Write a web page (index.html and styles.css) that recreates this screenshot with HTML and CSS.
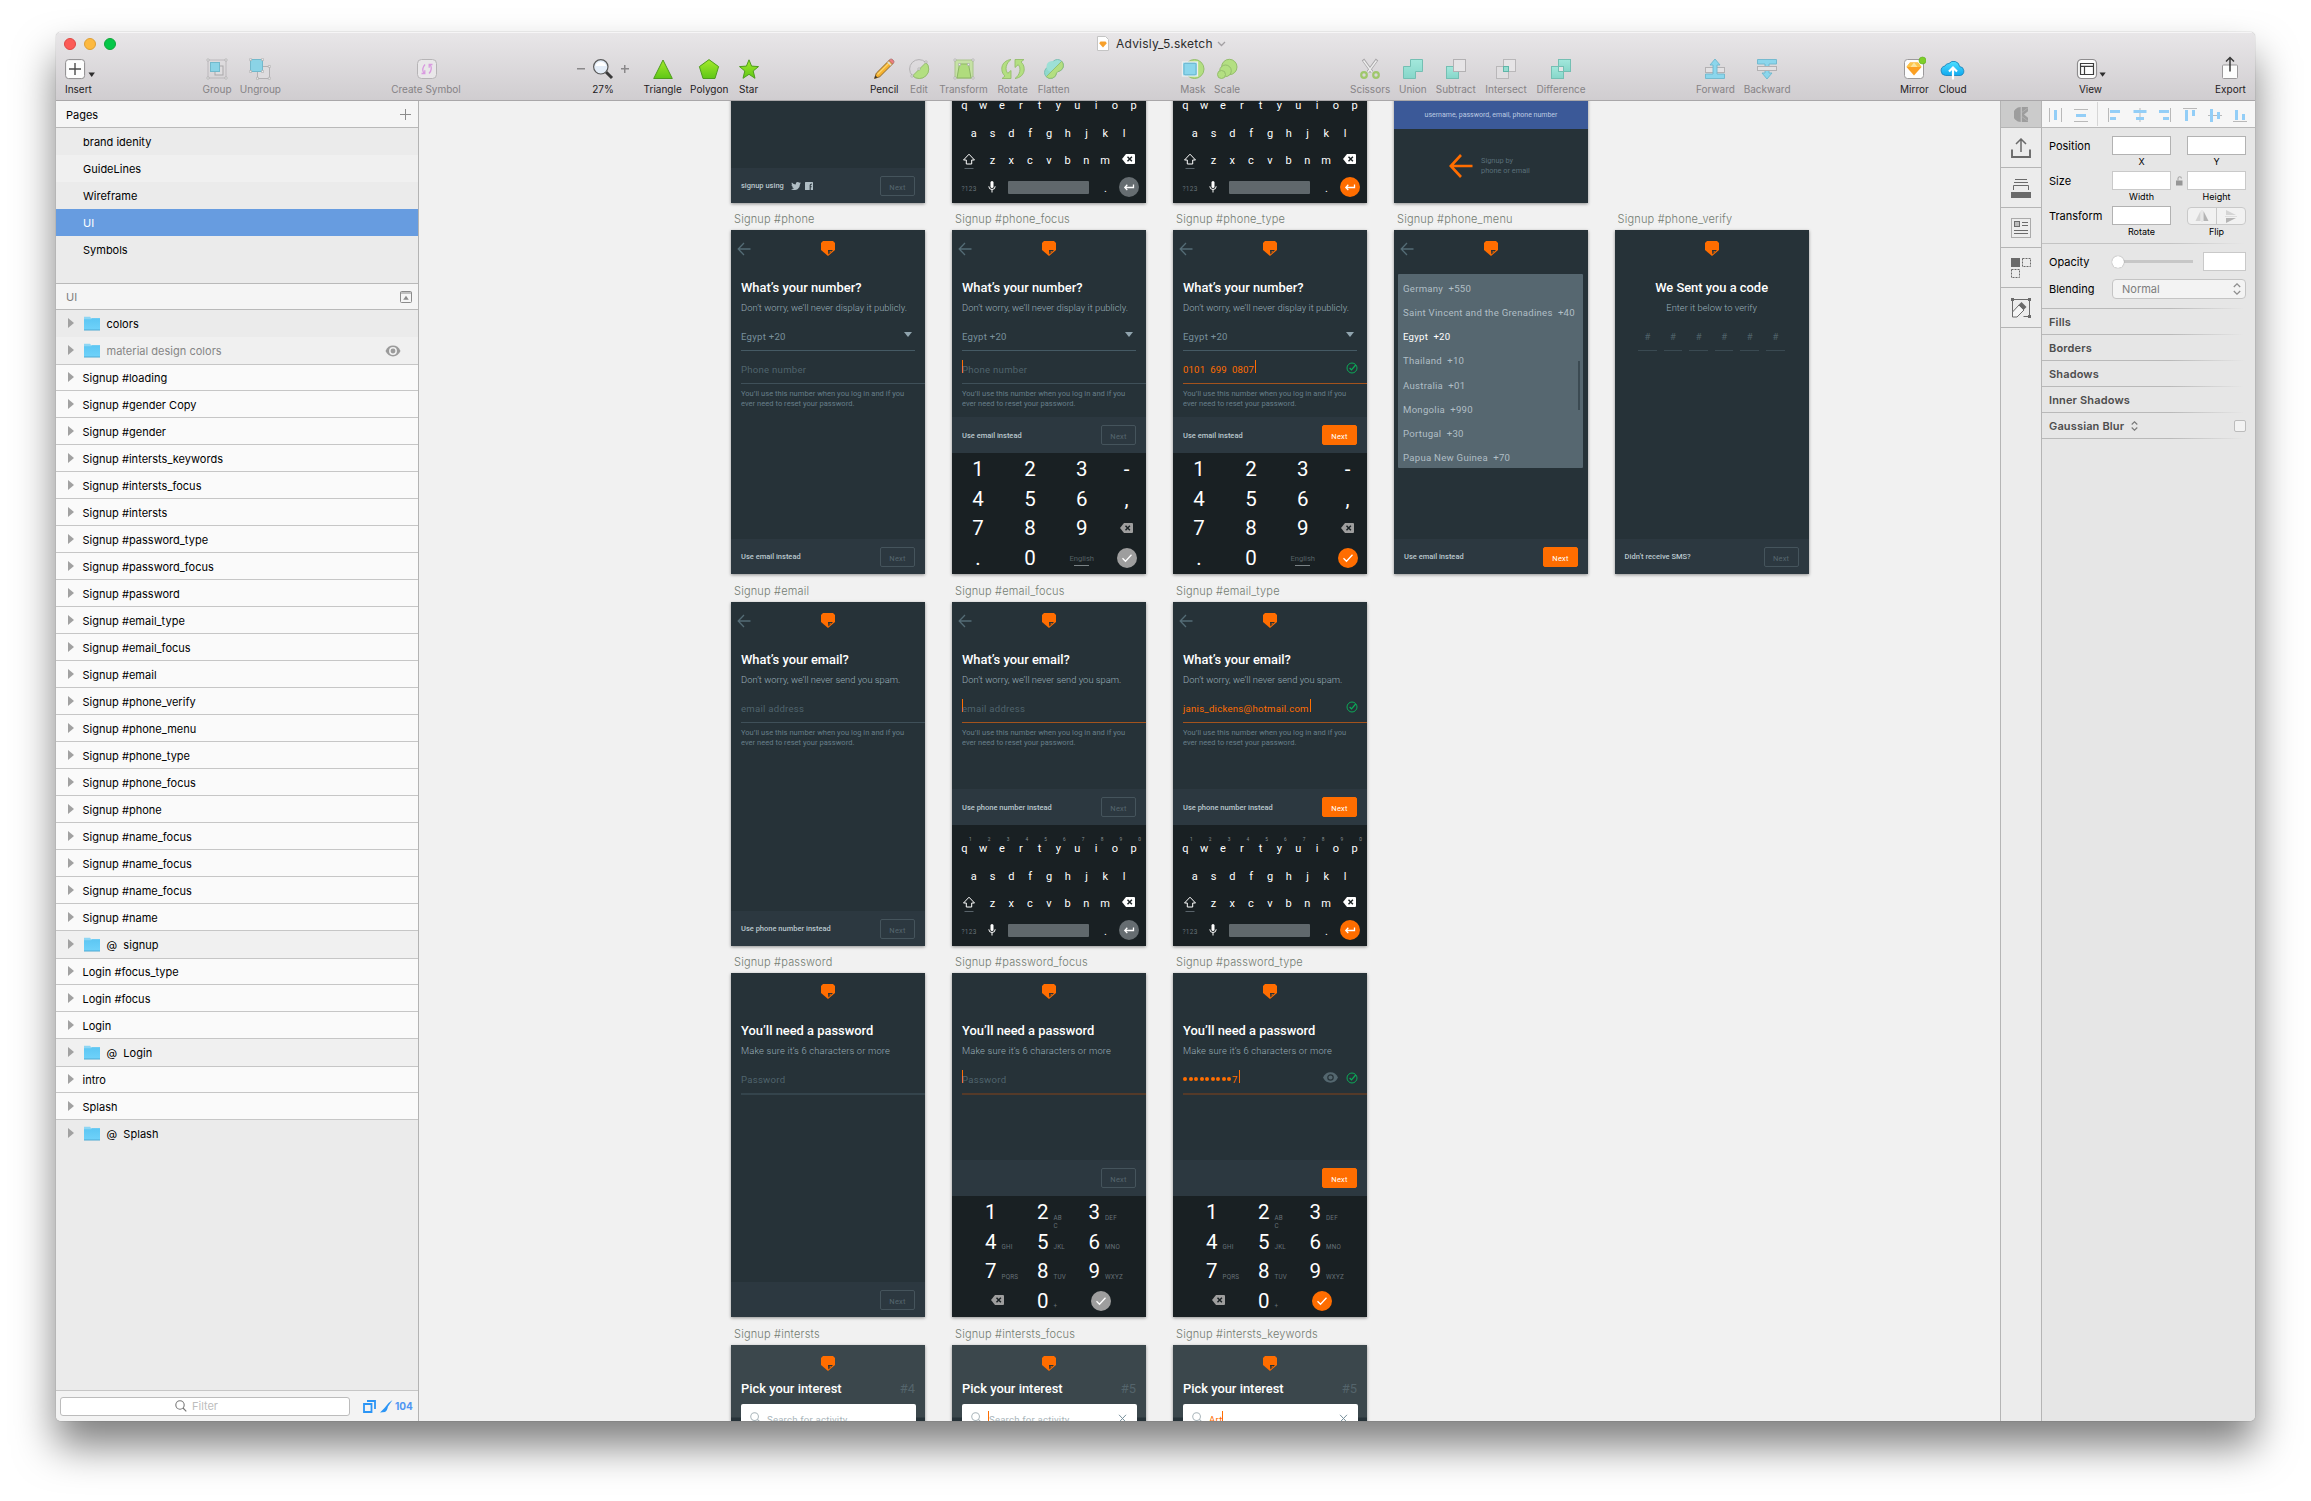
FILE: index.html
```html
<!DOCTYPE html>
<html lang="en">
<head>
<meta charset="utf-8">
<title>Advisly_5.sketch</title>
<link rel="stylesheet" href="styles.css">
</head>
<body>
<svg class="defs" aria-hidden="true">
  <linearGradient id="g-green" x1="0" y1="0" x2="0" y2="1"><stop offset="0" stop-color="#a4ea2c"/><stop offset="1" stop-color="#5fc716"/></linearGradient>
  <linearGradient id="g-teal" x1="0" y1="0" x2="0" y2="1"><stop offset="0" stop-color="#a3e8dc"/><stop offset="1" stop-color="#86d6c9"/></linearGradient>
  <linearGradient id="g-cloud" x1="0" y1="0" x2="0" y2="1"><stop offset="0" stop-color="#4fe0ff"/><stop offset="1" stop-color="#0fa9f0"/></linearGradient>
  <linearGradient id="g-folder" x1="0" y1="0" x2="0" y2="1"><stop offset="0" stop-color="#5cc6f3"/><stop offset="1" stop-color="#6fd2fa"/></linearGradient>
  <symbol id="logo" viewBox="0 0 14 15"><path d="M2 0h10l2 2v7l-7 6-7-6V2z" fill="#ff6d00"/><path d="M7 9h5l-4.600 4.500z" fill="#263238"/><path d="M8.600 10.200h1.800l-1.700 1.700z" fill="#ff6d00"/></symbol>
  <symbol id="back" viewBox="0 0 14 14"><path d="M13.500 7H1.500M7 1L1.200 7 7 13" fill="none" stroke="currentColor" stroke-width="1.300"/></symbol>
  <symbol id="shift" viewBox="0 0 14 17"><path d="M7 1.200L1.500 7H4.300v4h5.400V7h2.800z" fill="none" stroke="#fff"/><path d="M2.500 15.500h9" stroke="#59636a"/></symbol>
  <symbol id="bksp" viewBox="0 0 13 10"><path d="M4 0h8q1 0 1 1v8q0 1-1 1H4L0 5z" fill="currentColor"/><path d="M5.500 2.700l4.400 4.600M9.900 2.700L5.500 7.300" stroke="#192023" stroke-width="1.400"/></symbol>
  <symbol id="mic" viewBox="0 0 8 12"><rect x="2.500" y="0" width="3" height="7" rx="1.500" fill="#fff"/><path d="M.8 5.300a3.200 3.200 0 0 0 6.400 0M4 8.500v3" fill="none" stroke="#fff"/></symbol>
  <symbol id="enter" viewBox="0 0 20 20"><circle cx="10" cy="10" r="10" fill="currentColor"/><path d="M14.500 7.500v3H6M8.300 7.800L5.800 10.500l2.500 2.600" fill="none" stroke="#fff" stroke-width="1.300"/></symbol>
  <symbol id="done" viewBox="0 0 20 20"><circle cx="10" cy="10" r="10" fill="currentColor"/><path d="M5.500 10.300l3 3 6-6.500" fill="none" stroke="#fff" stroke-width="1.300"/></symbol>
  <symbol id="ok" viewBox="0 0 12 12"><circle cx="6" cy="6" r="5" fill="none" stroke="#0caa58"/><path d="M3.600 6l1.900 1.900L9.700 3" fill="none" stroke="#0caa58" stroke-width="1.300"/></symbol>
  <symbol id="eye" viewBox="0 0 15 11"><path d="M0 5.500Q2.500.3 7.500.3T15 5.500Q12.500 10.700 7.500 10.700T0 5.500z" fill="#54676f"/><circle cx="7.500" cy="5.500" r="2.700" fill="none" stroke="#263238" stroke-width="1.200"/></symbol>
  <symbol id="folder" viewBox="0 0 16 15"><path d="M0 .8h6l1.200 1.400H16V14H0z" fill="#8ed6f4"/><path d="M0 3.200h7l1-1h8V14H0z" fill="url(#g-folder)"/><path d="M0 14h16" stroke="#4ea9d2"/></symbol>
  <symbol id="glass" viewBox="0 0 12 12"><circle cx="5" cy="5" r="4.200" fill="none" stroke="currentColor" stroke-width="1.100"/><path d="M8 8l3.300 3.300" stroke="currentColor" stroke-width="1.200"/></symbol>
  <symbol id="cross" viewBox="0 0 9 9"><path d="M1 .8l7 7.400M8 .8L1 8.200" stroke="#78909c" fill="none"/></symbol>
</svg>

<div class="window">
  <header class="toolbar">
    <div class="titlebar">
      <div class="lights"><i class="red"></i><i class="amber"></i><i class="green"></i></div>
      <div class="doc-title">
        <svg width="12" height="15" viewBox="0 0 12 15"><path d="M.5.5h8l3 3v11H.5z" fill="#fff" stroke="#c4c4c4"/><path d="M3.500 5.500h5l1.300 1.800L6 11.500 2.200 7.300z" fill="#f7a02b"/></svg>
        <span>Advisly_5.sketch</span>
        <svg width="9" height="6" viewBox="0 0 9 6"><path d="M1 1l3.500 3.500L8 1" fill="none" stroke="#a3a0a3" stroke-width="1.300"/></svg>
      </div>
    </div>
    <nav class="tools">
      <div class="group insert"><div class="tool">
        <svg width="31" height="22" viewBox="0 0 31 22"><rect x=".6" y="1.600" width="19" height="19" rx="3" fill="#fdfdfd" stroke="#8e8c8e"/><path d="M10 5v12M4 11h12" stroke="#4a4a4a" stroke-width="1.400"/><path d="M23.500 14.500h6.400l-3.200 4.500z" fill="#2d2d2d"/></svg><span>Insert</span></div></div>
      <div class="group grouping">
        <div class="tool off"><svg width="22" height="22" viewBox="0 0 22 22"><rect x="2" y="2" width="18" height="18" fill="none" stroke="#bbb8bb"/><rect x="9" y="8" width="8" height="9" fill="#dedcde" stroke="#a9a7a9"/><rect x="4.500" y="4.500" width="9" height="9" fill="#8bd3e6" stroke="#72b9cc"/><path d="M1 1h2v2H1zM19 1h2v2h-2zM1 19h2v2H1zM19 19h2v2h-2z" fill="#eee" stroke="#aaa" stroke-width=".6"/></svg><span>Group</span></div>
        <div class="tool off"><svg width="22" height="22" viewBox="0 0 22 22"><rect x="8.500" y="8.500" width="12" height="12" fill="#dedcde" stroke="#b3b1b3"/><rect x="1.500" y="1.500" width="12" height="12" fill="#8bd3e6" stroke="#72b9cc"/><path d="M.6.6h2v2h-2zM12.500.6h2v2h-2zM.6 12.500h2v2h-2zM12.500 12.500h2v2h-2zM19.300 7.500h2v2h-2zM7.500 19.300h2v2h-2zM19.300 19.300h2v2h-2z" fill="#eee" stroke="#aaa" stroke-width=".6"/></svg><span>Ungroup</span></div>
      </div>
      <div class="group symbol"><div class="tool off"><svg width="22" height="22" viewBox="0 0 22 22"><rect x="1.500" y="1.500" width="19" height="19" rx="4" fill="#e9e7e9" stroke="#b6b4b6"/><path d="M9 6.500Q5 11 8 15.500M5.500 15.500h3.300v-3.300M13 15.500Q17 11 14 6.500M16.500 6.500h-3.300v3.300" fill="none" stroke="#d99be0" stroke-width="1.300"/></svg><span>Create Symbol</span></div></div>
      <div class="group zoom"><div class="tool"><div class="zoom-row"><b class="minus"></b>
        <svg width="22" height="22" viewBox="0 0 22 22"><path d="M14 14l6 6" stroke="#3a3a3a" stroke-width="3"/><circle cx="8.800" cy="8.800" r="7.200" fill="#e4edf8" stroke="#5a5a5a" stroke-width="1.200"/><path d="M3.500 8a5.500 5.500 0 0 1 10.600 0z" fill="#fff"/></svg><b class="plus"></b></div><span>27%</span></div></div>
      <div class="group shapes">
        <div class="tool"><svg width="22" height="22" viewBox="0 0 22 22"><path d="M11 2l9.300 18.500H1.700z" fill="url(#g-green)" stroke="#4e9c1e"/></svg><span>Triangle</span></div>
        <div class="tool"><svg width="22" height="22" viewBox="0 0 22 22"><path d="M11 1.600l9.600 7L17 20.500H5L1.400 8.600z" fill="url(#g-green)" stroke="#4e9c1e"/></svg><span>Polygon</span></div>
        <div class="tool"><svg width="22" height="22" viewBox="0 0 22 22"><path d="M11 1.800l2.600 6.300 6.900.5-5.300 4.400 1.800 7.300L11 16.300 5 20.300 6.800 13 1.500 8.600l6.900-.5z" fill="url(#g-green)" stroke="#4e9c1e"/></svg><span>Star</span></div>
      </div>
      <div class="group vector">
        <div class="tool"><svg width="22" height="22" viewBox="0 0 22 22"><path d="M1.500 20.500l1.800-5.300L16.500 2l3.500 3.500L6.800 18.700z" fill="#f5b02e" stroke="#8d6a30"/><path d="M4.500 16.500L17 4" stroke="#fbd56c" stroke-width="1.200"/><path d="M16 2.500L17.500 1.200q1-.6 2.500.8t.8 2.500L19.500 6z" fill="#ee7f7f" stroke="#a86b6b" stroke-width=".8"/><path d="M1.500 20.500l1-3 2 2z" fill="#333"/><path d="M14.700 3.800l3.500 3.500" stroke="#ddd" stroke-width="1.400"/></svg><span>Pencil</span></div>
        <div class="tool off"><svg width="22" height="22" viewBox="0 0 22 22"><circle cx="11" cy="11" r="9.400" fill="none" stroke="#b3b1b3"/><path d="M18 4.500a9.400 9.400 0 1 1-13.300 13.300z" fill="#b3df81" stroke="#94bd6c"/><path d="M17 3h2v2h-2zM10 10h2v2h-2zM3 17h2v2H3z" fill="#eee" stroke="#a5a5a5" stroke-width=".6"/></svg><span>Edit</span></div>
        <div class="tool off"><svg width="22" height="22" viewBox="0 0 22 22"><rect x="2" y="2" width="18" height="18" fill="#c6e2a5" stroke="#a9c48b"/><path d="M6.500 6h9L18 20H4z" fill="#b0dc7d" stroke="#8db566"/><path d="M1 1h2v2H1zM19 1h2v2h-2zM1 19h2v2H1zM19 19h2v2h-2zM5.500 5.500h2v2h-2zM14.500 5.500h2v2h-2z" fill="#eee" stroke="#aaa" stroke-width=".6"/></svg><span>Transform</span></div>
        <div class="tool off"><svg width="26" height="22" viewBox="0 0 26 22"><path d="M11 1.500C0 3 0 14 5 18l-3 2.500h9v-8l-3.200 2.800C4.500 12 6 5 11 1.500zM15 20.500C26 19 26 8 21 4l3-2.500h-9v8l3.200-2.800C21.500 10 20 17 15 20.500z" fill="#b3df81" stroke="#94bd6c" stroke-width=".9"/></svg><span>Rotate</span></div>
        <div class="tool off"><svg width="22" height="22" viewBox="0 0 22 22"><circle cx="14.500" cy="7.500" r="6" fill="#9de0d6" stroke="#7cbfb5"/><circle cx="7.500" cy="14.500" r="6" fill="#8fd9cd" stroke="#7cbfb5"/><circle cx="9" cy="8.500" r="5.500" fill="#9de0d6"/><path d="M18.700 3.300A6 6 0 0 1 16.500 13q-2 .5-3 2a6 6 0 0 1-10.200 3.700z" fill="#b3df81" stroke="#8fb86b" stroke-width=".8"/></svg><span>Flatten</span></div>
      </div>
      <div class="group masks">
        <div class="tool off"><svg width="24" height="22" viewBox="0 0 24 22"><circle cx="13.500" cy="11" r="9.500" fill="#b3df81" stroke="#94bd6c"/><rect x="1.500" y="4" width="15" height="14" fill="#8bd6ec" stroke="#eee" stroke-width="1.300"/><rect x="3" y="5.300" width="12" height="11.500" rx="1" fill="none" stroke="#6ab5cf"/></svg><span>Mask</span></div>
        <div class="tool off"><svg width="22" height="22" viewBox="0 0 22 22"><circle cx="13.300" cy="9" r="7.700" fill="#b3df81" stroke="#94bd6c"/><circle cx="9.500" cy="12.800" r="5.800" fill="#b3df81" stroke="#94bd6c"/><circle cx="5.500" cy="16.500" r="4" fill="#b3df81" stroke="#94bd6c"/></svg><span>Scale</span></div>
      </div>
      <div class="group boolean">
        <div class="tool off"><svg width="22" height="22" viewBox="0 0 22 22"><path d="M4 1.500L13 14M18 1.500L9 14" stroke="#a8a6a8" stroke-width="3"/><path d="M4.500 2.500L13 14M17.500 2.500L9 14" stroke="#ededed" stroke-width="1.400"/><circle cx="5" cy="17" r="2.800" fill="none" stroke="#9fc76c" stroke-width="2.200"/><circle cx="17" cy="17" r="2.800" fill="none" stroke="#9fc76c" stroke-width="2.200"/></svg><span>Scissors</span></div>
        <div class="tool off"><svg width="22" height="22" viewBox="0 0 22 22"><path d="M8.500 1.500h12v12h-7v7h-12v-12h7z" fill="url(#g-teal)" stroke="#74bfb3"/></svg><span>Union</span></div>
        <div class="tool off"><svg width="22" height="22" viewBox="0 0 22 22"><rect x="1.500" y="8.500" width="12" height="12" fill="url(#g-teal)" stroke="#74bfb3"/><rect x="8.500" y="1.500" width="12" height="12" fill="#e6e4e6" stroke="#b3b1b3"/></svg><span>Subtract</span></div>
        <div class="tool off"><svg width="22" height="22" viewBox="0 0 22 22"><rect x="1.500" y="8.500" width="12" height="12" fill="#e0dee0" stroke="#b9b7b9"/><rect x="8.500" y="1.500" width="12" height="12" fill="#e6e4e6" stroke="#b9b7b9"/><rect x="8.500" y="8.500" width="5" height="5" fill="#95ddd0" stroke="#60b5a8"/></svg><span>Intersect</span></div>
        <div class="tool off"><svg width="22" height="22" viewBox="0 0 22 22"><rect x="1.500" y="8.500" width="12" height="12" fill="url(#g-teal)" stroke="#74bfb3"/><rect x="8.500" y="1.500" width="12" height="12" fill="url(#g-teal)" stroke="#74bfb3"/><rect x="8.500" y="8.500" width="5" height="5" fill="#e6e4e6" stroke="#74bfb3"/></svg><span>Difference</span></div>
      </div>
      <div class="group arrange">
        <div class="tool off"><svg width="22" height="22" viewBox="0 0 22 22"><rect x="1.500" y="9.500" width="19" height="5" fill="#e3e1e3" stroke="#b3b1b3"/><path d="M11 1l5 6h-3v9h7.500v4.500h-19V16H9V7H6z" fill="#8bd6ec" stroke="#6db7cd" stroke-width=".9"/></svg><span>Forward</span></div>
        <div class="tool off"><svg width="22" height="22" viewBox="0 0 22 22"><path d="M1.500 1.500h19V6H13v9h3l-5 6-5-6h3V6H1.500z" fill="#8bd6ec" stroke="#6db7cd" stroke-width=".9"/><rect x="1.500" y="8.500" width="19" height="4" fill="#e3e1e3" stroke="#b3b1b3"/></svg><span>Backward</span></div>
      </div>
      <div class="group share">
        <div class="tool"><svg width="24" height="24" viewBox="0 0 24 24"><rect x="2.500" y="3.500" width="19" height="19" rx="3" fill="#fdfdfd" stroke="#9b999b"/><path d="M8 6.500h8l3.500 4.500L12 19.500 4.500 11z" fill="#fb9f22"/><path d="M8 6.500h8l3.500 4.500h-15z" fill="#fdc64a"/><path d="M12 6.500l3.500 4.500h-7z" fill="#fde39a"/><circle cx="20.500" cy="4.500" r="3.500" fill="#7dcf2a" stroke="#5fae1d" stroke-width=".6"/></svg><span>Mirror</span></div>
        <div class="tool"><svg width="26" height="22" viewBox="0 0 26 22"><path d="M5.500 17.500a4.800 4.800 0 0 1-.5-9.500 4 4 0 0 1 4-2.500 6 6 0 0 1 10.600 3 4.600 4.600 0 0 1 .9 9z" fill="url(#g-cloud)" stroke="#1d87bd" stroke-width=".9"/><path d="M13 21.500V11M9 13.500l4-4 4 4" fill="none" stroke="#fff" stroke-width="2.200"/></svg><span>Cloud</span></div>
      </div>
      <div class="group view"><div class="tool"><svg width="31" height="22" viewBox="0 0 31 22"><rect x="2.500" y="1.500" width="19" height="19" rx="4" fill="#fdfdfd" stroke="#8e8c8e" stroke-width="1.200"/><path d="M5.500 5.500h13v11h-13zM5.500 8.300h13M9.500 8.300v8.200" fill="none" stroke="#3d3d3d" stroke-width="1.200"/><path d="M24.500 14.500h6.200l-3.100 4.200z" fill="#2d2d2d"/></svg><span>View</span></div></div>
      <div class="group export"><div class="tool"><svg width="18" height="24" viewBox="0 0 18 24"><path d="M1.500 10q0-1 1-1h13q1 0 1 1v11.500q0 1-1 1h-13q-1 0-1-1z" fill="#fdfdfd" stroke="#9b999b"/><path d="M9 15.500V2M5 5.500l4-4 4 4" fill="none" stroke="#3a3a3a" stroke-width="1.500"/></svg><span>Export</span></div></div>
    </nav>
  </header>

  <div class="body">
    <aside class="sidebar">
      <div class="side-head"><span>Pages</span><svg width="11" height="11" viewBox="0 0 11 11"><path d="M5.500 0v11M0 5.500h11" stroke="#8b8b8b"/></svg></div>
      <ul class="pages"><li>brand idenity</li><li>GuideLines</li><li>Wireframe</li><li class="selected">UI</li><li>Symbols</li></ul>
      <div class="side-head muted"><span>UI</span><svg width="12" height="12" viewBox="0 0 12 12"><rect x=".5" y=".5" width="11" height="11" rx="1" fill="none" stroke="#8b8b8b"/><path d="M0 2h12" stroke="#8b8b8b"/><path d="M3.200 8.800h5.600L6 4.800z" fill="#8b8b8b"/></svg></div>
      <ul class="layers">
        <li class="dir"><i></i><svg width="16" height="15"><use href="#folder"/></svg>colors</li>
        <li class="dir alt hidden-layer"><i></i><svg width="16" height="15"><use href="#folder"/></svg>material design colors<svg class="vis" width="16" height="12" viewBox="0 0 16 12"><path d="M.5 6Q3 .6 8 .6T15.500 6Q13 11.400 8 11.400T.5 6z" fill="#9b9b9b"/><circle cx="8" cy="6" r="3.200" fill="#9b9b9b" stroke="#efefef" stroke-width="1.500"/></svg></li>
        <li><i></i>Signup #loading</li>
        <li><i></i>Signup #gender Copy</li>
        <li><i></i>Signup #gender</li>
        <li><i></i>Signup #intersts_keywords</li>
        <li><i></i>Signup #intersts_focus</li>
        <li><i></i>Signup #intersts</li>
        <li><i></i>Signup #password_type</li>
        <li><i></i>Signup #password_focus</li>
        <li><i></i>Signup #password</li>
        <li><i></i>Signup #email_type</li>
        <li><i></i>Signup #email_focus</li>
        <li><i></i>Signup #email</li>
        <li><i></i>Signup #phone_verify</li>
        <li><i></i>Signup #phone_menu</li>
        <li><i></i>Signup #phone_type</li>
        <li><i></i>Signup #phone_focus</li>
        <li><i></i>Signup #phone</li>
        <li><i></i>Signup #name_focus</li>
        <li><i></i>Signup #name_focus</li>
        <li><i></i>Signup #name_focus</li>
        <li><i></i>Signup #name</li>
        <li class="dir alt"><i></i><svg width="16" height="15"><use href="#folder"/></svg>@&nbsp; signup</li>
        <li><i></i>Login #focus_type</li>
        <li><i></i>Login #focus</li>
        <li><i></i>Login</li>
        <li class="dir alt"><i></i><svg width="16" height="15"><use href="#folder"/></svg>@&nbsp; Login</li>
        <li><i></i>intro</li>
        <li><i></i>Splash</li>
        <li class="dir"><i></i><svg width="16" height="15"><use href="#folder"/></svg>@&nbsp; Splash</li>
      </ul>
      <footer class="filter">
        <div class="filter-box"><svg width="12" height="12"><use href="#glass"/></svg><span>Filter</span></div>
        <svg width="13" height="13" viewBox="0 0 13 13"><path d="M1 4h7.500v8H1zM4 1h8v8" fill="none" stroke="#2b95f5" stroke-width="1.800"/></svg>
        <svg class="knife" width="13" height="13" viewBox="0 0 13 13"><path d="M12.500 0Q8 2.500 4.500 8L0 12.500 5 12q2-1 3-5.500Z" fill="#2b95f5"/></svg>
        <b>104</b>
      </footer>
    </aside>

    <main class="canvas">
      <section class="board c1 r0">
        <div class="screen"><div class="bar"><span class="using">signup using</span><svg class="tw" width="10" height="8" viewBox="0 0 10 8"><path d="M0 7Q2 7.200 3 6.300 1.700 6 1.200 5h.8Q.6 4.400.5 3l.8.200Q.2 2 .9.600 2.500 2.400 4.700 2.500 4.500.200 6.700 0q1 0 1.600.7L9.600.200 8.900 1.400 10 1.200 9 2.200Q9 5.500 6.500 7.200 3 9 0 7z" fill="#b0bec5"/></svg><svg width="8" height="8" viewBox="0 0 8 8"><rect width="8" height="8" rx=".5" fill="#b0bec5"/><path d="M5.200 8V4.800h1.500M5.200 5V3q0-1 1.800-1" fill="none" stroke="#2d3940" stroke-width="1.100"/></svg><button class="next">Next</button></div></div>
      </section>
      <section class="board c2 r0"><div class="screen">
        <div class="keys"><div class="krow"><b>q</b><b>w</b><b>e</b><b>r</b><b>t</b><b>y</b><b>u</b><b>i</b><b>o</b><b>p</b></div><div class="krow mid"><b>a</b><b>s</b><b>d</b><b>f</b><b>g</b><b>h</b><b>j</b><b>k</b><b>l</b></div><div class="krow low"><svg class="wide" width="14" height="17"><use href="#shift"/></svg><b>z</b><b>x</b><b>c</b><b>v</b><b>b</b><b>n</b><b>m</b><svg class="wide" width="13" height="10"><use href="#bksp"/></svg></div><div class="krow foot"><small>?123</small><svg class="mic" width="8" height="12"><use href="#mic"/></svg><em></em><b>.</b><svg class="go" width="20" height="20"><use href="#enter"/></svg></div></div>
      </div></section>
      <section class="board c3 r0"><div class="screen">
        <div class="keys active"><div class="krow"><b>q</b><b>w</b><b>e</b><b>r</b><b>t</b><b>y</b><b>u</b><b>i</b><b>o</b><b>p</b></div><div class="krow mid"><b>a</b><b>s</b><b>d</b><b>f</b><b>g</b><b>h</b><b>j</b><b>k</b><b>l</b></div><div class="krow low"><svg class="wide" width="14" height="17"><use href="#shift"/></svg><b>z</b><b>x</b><b>c</b><b>v</b><b>b</b><b>n</b><b>m</b><svg class="wide" width="13" height="10"><use href="#bksp"/></svg></div><div class="krow foot"><small>?123</small><svg class="mic" width="8" height="12"><use href="#mic"/></svg><em></em><b>.</b><svg class="go" width="20" height="20"><use href="#enter"/></svg></div></div>
      </div></section>
      <section class="board c4 r0"><div class="screen">
        <div class="fb">username, password, email, phone number</div>
        <div class="by"><svg width="24" height="24" viewBox="0 0 24 24"><path d="M23.500 12H2.500M12 1L1.800 12 12 23" fill="none" stroke="#ff6d00" stroke-width="2.600"/></svg><p>Signup by<br>phone or email</p></div>
      </div></section>

      <section class="board c1 r1"><h2>Signup #phone</h2><div class="screen">
        <div class="top"><svg class="arrow" width="14" height="14"><use href="#back"/></svg><svg width="14" height="15"><use href="#logo"/></svg></div>
        <h3>What’s your number?</h3><p class="sub">Don’t worry, we’ll never display it publicly.</p>
        <div class="field pick"><span>Egypt +20</span><i class="tri"></i></div>
        <div class="field empty"><span>Phone number</span></div>
        <p class="hint">You’ll use this number when you log in and if you<br>ever need to reset your password.</p>
        <div class="bar"><span>Use email instead</span><button class="next">Next</button></div>
      </div></section>
      <section class="board c2 r1"><h2>Signup #phone_focus</h2><div class="screen">
        <div class="top"><svg class="arrow" width="14" height="14"><use href="#back"/></svg><svg width="14" height="15"><use href="#logo"/></svg></div>
        <h3>What’s your number?</h3><p class="sub">Don’t worry, we’ll never display it publicly.</p>
        <div class="field pick"><span>Egypt +20</span><i class="tri"></i></div>
        <div class="field empty"><i class="caret"></i><span>Phone number</span></div>
        <p class="hint">You’ll use this number when you log in and if you<br>ever need to reset your password.</p>
        <div class="bar"><span>Use email instead</span><button class="next">Next</button></div>
        <div class="numpad"><b>1</b><b>2</b><b>3</b><b>-</b><b>4</b><b>5</b><b>6</b><b>,</b><b>7</b><b>8</b><b>9</b><svg class="del" width="13" height="10"><use href="#bksp"/></svg><b>.</b><b>0</b><small>English</small><svg class="go" width="20" height="20"><use href="#done"/></svg></div>
      </div></section>
      <section class="board c3 r1"><h2>Signup #phone_type</h2><div class="screen">
        <div class="top"><svg class="arrow" width="14" height="14"><use href="#back"/></svg><svg width="14" height="15"><use href="#logo"/></svg></div>
        <h3>What’s your number?</h3><p class="sub">Don’t worry, we’ll never display it publicly.</p>
        <div class="field pick"><span>Egypt +20</span><i class="tri"></i></div>
        <div class="field typed"><span class="digits">0101&nbsp; 699&nbsp; 0807</span><i class="caret"></i><svg class="ok" width="12" height="12"><use href="#ok"/></svg></div>
        <p class="hint">You’ll use this number when you log in and if you<br>ever need to reset your password.</p>
        <div class="bar"><span>Use email instead</span><button class="next on">Next</button></div>
        <div class="numpad active"><b>1</b><b>2</b><b>3</b><b>-</b><b>4</b><b>5</b><b>6</b><b>,</b><b>7</b><b>8</b><b>9</b><svg class="del" width="13" height="10"><use href="#bksp"/></svg><b>.</b><b>0</b><small>English</small><svg class="go" width="20" height="20"><use href="#done"/></svg></div>
      </div></section>
      <section class="board c4 r1"><h2>Signup #phone_menu</h2><div class="screen">
        <div class="top"><svg class="arrow" width="14" height="14"><use href="#back"/></svg><svg width="14" height="15"><use href="#logo"/></svg></div>
        <ul class="menu"><li>Germany&nbsp; +550</li><li>Saint Vincent and the Grenadines&nbsp; +40</li><li class="cur">Egypt&nbsp; +20</li><li>Thailand&nbsp; +10</li><li>Australia&nbsp; +01</li><li>Mongolia&nbsp; +990</li><li>Portugal&nbsp; +30</li><li>Papua New Guinea&nbsp; +70</li></ul>
        <div class="bar"><span>Use email instead</span><button class="next on">Next</button></div>
      </div></section>
      <section class="board c5 r1"><h2>Signup #phone_verify</h2><div class="screen verify">
        <div class="top"><svg width="14" height="15"><use href="#logo"/></svg></div>
        <h3>We Sent you a code</h3><p class="sub">Enter it below to verify</p>
        <div class="code"><b>#</b><b>#</b><b>#</b><b>#</b><b>#</b><b>#</b></div>
        <div class="bar"><span>Didn’t receive SMS?</span><button class="next">Next</button></div>
      </div></section>

      <section class="board c1 r2"><h2>Signup #email</h2><div class="screen">
        <div class="top"><svg class="arrow" width="14" height="14"><use href="#back"/></svg><svg width="14" height="15"><use href="#logo"/></svg></div>
        <h3>What’s your email?</h3><p class="sub">Don’t worry, we’ll never send you spam.</p>
        <div class="field empty"><span>email address</span></div>
        <p class="hint">You’ll use this number when you log in and if you<br>ever need to reset your password.</p>
        <div class="bar"><span>Use phone number instead</span><button class="next">Next</button></div>
      </div></section>
      <section class="board c2 r2"><h2>Signup #email_focus</h2><div class="screen">
        <div class="top"><svg class="arrow" width="14" height="14"><use href="#back"/></svg><svg width="14" height="15"><use href="#logo"/></svg></div>
        <h3>What’s your email?</h3><p class="sub">Don’t worry, we’ll never send you spam.</p>
        <div class="field empty hot"><i class="caret"></i><span>email address</span></div>
        <p class="hint">You’ll use this number when you log in and if you<br>ever need to reset your password.</p>
        <div class="bar"><span>Use phone number instead</span><button class="next">Next</button></div>
        <div class="keys"><div class="nums"><i>1</i><i>2</i><i>3</i><i>4</i><i>5</i><i>6</i><i>7</i><i>8</i><i>9</i><i>0</i></div><div class="krow"><b>q</b><b>w</b><b>e</b><b>r</b><b>t</b><b>y</b><b>u</b><b>i</b><b>o</b><b>p</b></div><div class="krow mid"><b>a</b><b>s</b><b>d</b><b>f</b><b>g</b><b>h</b><b>j</b><b>k</b><b>l</b></div><div class="krow low"><svg class="wide" width="14" height="17"><use href="#shift"/></svg><b>z</b><b>x</b><b>c</b><b>v</b><b>b</b><b>n</b><b>m</b><svg class="wide" width="13" height="10"><use href="#bksp"/></svg></div><div class="krow foot"><small>?123</small><svg class="mic" width="8" height="12"><use href="#mic"/></svg><em></em><b>.</b><svg class="go" width="20" height="20"><use href="#enter"/></svg></div></div>
      </div></section>
      <section class="board c3 r2"><h2>Signup #email_type</h2><div class="screen">
        <div class="top"><svg class="arrow" width="14" height="14"><use href="#back"/></svg><svg width="14" height="15"><use href="#logo"/></svg></div>
        <h3>What’s your email?</h3><p class="sub">Don’t worry, we’ll never send you spam.</p>
        <div class="field typed"><span>janis_dickens@hotmail.com</span><i class="caret"></i><svg class="ok" width="12" height="12"><use href="#ok"/></svg></div>
        <p class="hint">You’ll use this number when you log in and if you<br>ever need to reset your password.</p>
        <div class="bar"><span>Use phone number instead</span><button class="next on">Next</button></div>
        <div class="keys active"><div class="nums"><i>1</i><i>2</i><i>3</i><i>4</i><i>5</i><i>6</i><i>7</i><i>8</i><i>9</i><i>0</i></div><div class="krow"><b>q</b><b>w</b><b>e</b><b>r</b><b>t</b><b>y</b><b>u</b><b>i</b><b>o</b><b>p</b></div><div class="krow mid"><b>a</b><b>s</b><b>d</b><b>f</b><b>g</b><b>h</b><b>j</b><b>k</b><b>l</b></div><div class="krow low"><svg class="wide" width="14" height="17"><use href="#shift"/></svg><b>z</b><b>x</b><b>c</b><b>v</b><b>b</b><b>n</b><b>m</b><svg class="wide" width="13" height="10"><use href="#bksp"/></svg></div><div class="krow foot"><small>?123</small><svg class="mic" width="8" height="12"><use href="#mic"/></svg><em></em><b>.</b><svg class="go" width="20" height="20"><use href="#enter"/></svg></div></div>
      </div></section>

      <section class="board c1 r3"><h2>Signup #password</h2><div class="screen">
        <div class="top"><svg width="14" height="15"><use href="#logo"/></svg></div>
        <h3>You’ll need a password</h3><p class="sub airy">Make sure it’s 6 characters or more</p>
        <div class="field empty thick"><span>Password</span></div>
        <div class="bar"><button class="next">Next</button></div>
      </div></section>
      <section class="board c2 r3"><h2>Signup #password_focus</h2><div class="screen">
        <div class="top"><svg width="14" height="15"><use href="#logo"/></svg></div>
        <h3>You’ll need a password</h3><p class="sub airy">Make sure it’s 6 characters or more</p>
        <div class="field empty thick ember"><i class="caret"></i><span>Password</span></div>
        <div class="bar"><button class="next">Next</button></div>
        <div class="dialpad"><b>1<small></small></b><b>2<small class="two">AB<br>C</small></b><b>3<small>DEF</small></b><b>4<small>GHI</small></b><b>5<small>JKL</small></b><b>6<small>MNO</small></b><b>7<small>PQRS</small></b><b>8<small>TUV</small></b><b>9<small>WXYZ</small></b><svg class="del" width="13" height="10"><use href="#bksp"/></svg><b>0<small>+</small></b><svg class="go" width="20" height="20"><use href="#done"/></svg></div>
      </div></section>
      <section class="board c3 r3"><h2>Signup #password_type</h2><div class="screen">
        <div class="top"><svg width="14" height="15"><use href="#logo"/></svg></div>
        <h3>You’ll need a password</h3><p class="sub airy">Make sure it’s 6 characters or more</p>
        <div class="field typed thick ember"><span class="dots"><i></i><i></i><i></i><i></i><i></i><i></i><i></i><i></i><i></i></span><span>7</span><i class="caret"></i><svg class="peek" width="15" height="11"><use href="#eye"/></svg><svg class="ok near" width="12" height="12"><use href="#ok"/></svg></div>
        <div class="bar"><button class="next on">Next</button></div>
        <div class="dialpad active"><b>1<small></small></b><b>2<small class="two">AB<br>C</small></b><b>3<small>DEF</small></b><b>4<small>GHI</small></b><b>5<small>JKL</small></b><b>6<small>MNO</small></b><b>7<small>PQRS</small></b><b>8<small>TUV</small></b><b>9<small>WXYZ</small></b><svg class="del" width="13" height="10"><use href="#bksp"/></svg><b>0<small>+</small></b><svg class="go" width="20" height="20"><use href="#done"/></svg></div>
      </div></section>

      <section class="board c1 r4"><h2>Signup #intersts</h2><div class="screen interests">
        <div class="top"><svg width="14" height="15"><use href="#logo"/></svg></div>
        <h3>Pick your interest<em>#4</em></h3>
        <div class="search"><svg width="11" height="11"><use href="#glass"/></svg><span>Search for activity</span></div>
      </div></section>
      <section class="board c2 r4"><h2>Signup #intersts_focus</h2><div class="screen interests">
        <div class="top"><svg width="14" height="15"><use href="#logo"/></svg></div>
        <h3>Pick your interest<em>#5</em></h3>
        <div class="search"><svg width="11" height="11"><use href="#glass"/></svg><i class="caret"></i><span>Search for activity</span><svg class="clear" width="9" height="9"><use href="#cross"/></svg></div>
      </div></section>
      <section class="board c3 r4"><h2>Signup #intersts_keywords</h2><div class="screen interests">
        <div class="top"><svg width="14" height="15"><use href="#logo"/></svg></div>
        <h3>Pick your interest<em>#5</em></h3>
        <div class="search"><svg width="11" height="11"><use href="#glass"/></svg><span class="query">Art</span><i class="caret"></i><svg class="clear" width="9" height="9"><use href="#cross"/></svg></div>
      </div></section>
    </main>

    <nav class="strip">
      <div class="tab first"><svg width="14" height="15" viewBox="0 0 14 15"><path d="M6.700 0v15A7.500 7.500 0 0 1 6.700 0zM7.800 0H14v4.200L10 7.500l4 3.300V15H7.800z" fill="#9d9d9d"/><path d="M7.800 5.500L13.800 1M7.800 9.500l6 4.500" stroke="#b9b9b9" stroke-width=".7"/></svg></div>
      <div class="tab"><svg width="20" height="20" viewBox="0 0 20 20"><path d="M1 11.500V19h18v-7.500" fill="none" stroke="#6a6a6a" stroke-width="1.900"/><path d="M10 14V1.500M5 6l5-5 5 5" fill="none" stroke="#6a6a6a" stroke-width="1.500"/></svg></div>
      <div class="tab"><svg width="20" height="20" viewBox="0 0 20 20"><path d="M4 1.500h12M3 4.500h14M2.500 12V7.500h15V12" fill="none" stroke="#6a6a6a"/><rect y="14" width="20" height="6" fill="#6a6a6a"/></svg></div>
      <div class="tab"><svg width="20" height="20" viewBox="0 0 20 20"><rect x=".5" y=".5" width="19" height="19" fill="none" stroke="#6a6a6a" stroke-dasharray="1 1"/><rect x="3.500" y="3.500" width="5" height="5" fill="#bbb" stroke="#6a6a6a"/><path d="M11 4.500h6M11 7.500h6M3 12.500h14M3 15.500h14" stroke="#6a6a6a"/></svg></div>
      <div class="tab"><svg width="20" height="20" viewBox="0 0 20 20"><rect width="9" height="9" fill="#6a6a6a"/><path d="M11.500.5h8v8h-8zM.5 11.500h8v8h-8z" fill="none" stroke="#6a6a6a" stroke-dasharray="2 1"/></svg></div>
      <div class="tab"><svg width="20" height="20" viewBox="0 0 20 20"><path d="M1.500 15V1.500h17v17h-6" fill="none" stroke="#6a6a6a"/><path d="M0 0h3v3H0zM17 0h3v3h-3zM17 17h3v3h-3z" fill="#6a6a6a"/><path d="M1.500 19v-5L8 7l5 5-7 7z" fill="#f5f5f5" stroke="#6a6a6a"/><path d="M7.500 7l3-3 5 5-3 3z" fill="#6a6a6a"/></svg></div>
    </nav>

    <aside class="inspector">
      <div class="align">
        <svg width="14" height="14" viewBox="0 0 14 14"><path d="M.5 0v14M12.500 0v14" stroke="#b9b9b9"/><path d="M5 2h3v10H5z" fill="#93cef7"/></svg>
        <svg width="14" height="14" viewBox="0 0 14 14"><path d="M0 1.500h14M0 13.500h14" stroke="#b9b9b9"/><path d="M2 6h10v3H2z" fill="#93cef7"/></svg>
        <i></i>
        <svg width="14" height="14" viewBox="0 0 14 14"><path d="M.5 0v14" stroke="#b9b9b9"/><path d="M2 2h10v3H2zM2 9h6v3H2z" fill="#93cef7"/></svg>
        <svg width="14" height="14" viewBox="0 0 14 14"><path d="M7 0v14" stroke="#b9b9b9"/><path d="M.5 2h13v3H.5zM3 9h8v3H3z" fill="#93cef7"/></svg>
        <svg width="14" height="14" viewBox="0 0 14 14"><path d="M12.500 0v14" stroke="#b9b9b9"/><path d="M1 2h10v3H1zM5 9h6v3H5z" fill="#93cef7"/></svg>
        <svg width="14" height="14" viewBox="0 0 14 14"><path d="M0 .5h14" stroke="#b9b9b9"/><path d="M2 2h3v11H2zM9 2h3v6H9z" fill="#93cef7"/></svg>
        <svg width="14" height="14" viewBox="0 0 14 14"><path d="M0 7.500h14" stroke="#b9b9b9"/><path d="M2 1h3v13H2zM9 4h3v7H9z" fill="#93cef7"/></svg>
        <svg width="14" height="14" viewBox="0 0 14 14"><path d="M0 13.500h14" stroke="#b9b9b9"/><path d="M2 2h3v10H2zM9 6h3v6H9z" fill="#93cef7"/></svg>
      </div>
      <div class="geometry">
        <label>Position</label><div class="cell"><u></u><span>X</span></div><div></div><div class="cell"><u></u><span>Y</span></div>
        <label>Size</label><div class="cell"><u class="pale"></u><span>Width</span></div><div class="lock"><svg width="7" height="10" viewBox="0 0 7 10"><rect y="4.500" width="6.500" height="5" fill="#969696"/><path d="M2 4.500V2.500a1.700 1.700 0 0 1 3.400 0" fill="none" stroke="#a5a5a5" stroke-width="1.100"/></svg></div><div class="cell"><u class="pale"></u><span>Height</span></div>
        <label>Transform</label><div class="cell"><u></u><span>Rotate</span></div><div></div><div class="cell"><div class="flip"><svg width="14" height="12" viewBox="0 0 14 12"><path d="M5.500 1v10H.5z" fill="#d4d4d4"/><path d="M7 0v12" stroke="#ddd"/><path d="M8.500 1v10h5z" fill="#b4b4b4"/></svg><svg width="12" height="13" viewBox="0 0 12 13"><path d="M1 0v5h10z" fill="#d4d4d4"/><path d="M0 6.500h12" stroke="#ddd"/><path d="M1 13V8h10z" fill="#b4b4b4"/></svg></div><span>Flip</span></div>
      </div>
      <div class="style">
        <label>Opacity</label><div class="slider"><i></i></div><u class="pale"></u>
        <label>Blending</label><div class="select">Normal<svg width="8" height="12" viewBox="0 0 8 12"><path d="M.8 4L4 .9 7.200 4M.8 8L4 11.100 7.200 8" fill="none" stroke="#8e8e8e" stroke-width="1.300"/></svg></div>
      </div>
      <div class="sect">Fills</div><div class="sect">Borders</div><div class="sect">Shadows</div><div class="sect">Inner Shadows</div>
      <div class="sect">Gaussian Blur<svg width="7" height="10" viewBox="0 0 7 10"><path d="M.7 3.500L3.500.8l2.800 2.700M.7 6.500l2.800 2.700 2.800-2.700" fill="none" stroke="#777" stroke-width="1.100"/></svg><i class="check"></i></div>
      <div class="sect last"></div>
    </aside>
  </div>
</div>
</body>
</html>
```
FILE: styles.css
```css
* { box-sizing: border-box; margin: 0; padding: 0; }
body { width: 2311px; height: 1501px; padding: 32px 56px 0; background: #fff; overflow: hidden; font-family: Inter, "Liberation Sans", sans-serif; font-size: 11px; color: #000; }
ul { list-style: none; }
svg { display: block; flex: none; }
i, em { font-style: normal; }
.defs { position: absolute; width: 0; height: 0; }

.window { width: 2199px; height: 1389px; border-radius: 5px; overflow: hidden; display: flex; flex-direction: column; box-shadow: 0 0 1px rgba(0,0,0,.5), 0 25px 40px rgba(0,0,0,.5); background: #f1f1f1; }

/* toolbar */
.toolbar { height: 69px; flex: none; background: linear-gradient(#e8e6e8, #d0cdd0); border-top: 1px solid #f6f5f6; border-bottom: 1px solid #a9a7a9; }
.titlebar { height: 22px; display: flex; align-items: center; }
.lights { display: flex; gap: 8px; padding-left: 8px; }
.lights i { width: 12px; height: 12px; border-radius: 50%; }
.red { background: #fc5b57; border: 1px solid #df4744; }
.amber { background: #fdb940; border: 1px solid #de9f34; }
.green { background: #05c748; border: 1px solid #10a53a; }
.doc-title { margin: -1px 0 0 981px; display: flex; align-items: center; font-size: 12px; letter-spacing: .22px; color: #2c2c2c; }
.doc-title span { margin: 0 4px 0 7px; }
.tools { display: flex; height: 41px; }
.group { display: flex; }
.tool { flex: none; display: flex; flex-direction: column; align-items: center; justify-content: flex-start; white-space: nowrap; font-size: 10px; color: #1e1b1e; }
.tool > svg, .zoom-row { margin-top: 3px; }
.tool > svg[height="24"] { margin-top: 1px; }
.tool > span { margin-top: auto; line-height: 14px; }
.tool.off { color: #868386; }
.insert { margin-left: 9px; }
.insert .tool { width: 40px; align-items: flex-start; }
.grouping { margin-left: 90.300px; }
.grouping .tool { width: 43.400px; }
.symbol { margin-left: 103.900px; }
.symbol .tool { width: 80px; }
.symbol svg { margin-left: 2px; }
.zoom { margin-left: 105px; }
.zoom .tool { width: 64px; }
.zoom-row { display: flex; align-items: center; gap: 7px; }
.minus, .plus { width: 8px; height: 8px; background: linear-gradient(#8a888a, #8a888a) center/8px 1.500px no-repeat; }
.plus { background: linear-gradient(#8a888a, #8a888a) center/8px 1.500px no-repeat, linear-gradient(#8a888a, #8a888a) center/1.500px 8px no-repeat; }
.shapes { margin-left: 4.100px; }
.shapes .tool { width: 47.200px; }
.shapes .tool:nth-child(2) { width: 46px; }
.shapes .tool:nth-child(3) { width: 32.800px; }
.vector { margin-left: 100.700px; }
.vector .tool { width: 41px; }
.vector .tool:nth-child(1) { width: 37px; }
.vector .tool:nth-child(2) { width: 32.400px; }
.vector .tool:nth-child(3) { width: 57px; }
.masks { margin-left: 101.600px; }
.masks .tool { width: 34.300px; }
.boolean { margin-left: 101.300px; }
.boolean .tool { width: 49px; }
.boolean .tool:nth-child(2) { width: 36.400px; }
.boolean .tool:nth-child(3) { width: 49.600px; }
.boolean .tool:nth-child(4) { width: 51px; }
.boolean .tool:nth-child(5) { width: 59px; }
.arrange { margin-left: 99.100px; }
.arrange .tool { width: 51.600px; }
.share { margin-left: 102.400px; }
.share .tool { width: 38.300px; }
.view { margin-left: 98.600px; }
.view .tool { width: 40px; }
.export { margin-left: 100px; }
.export .tool { width: 40px; }

.body { flex: 1; display: flex; min-height: 0; }

/* sidebar */
.sidebar { width: 363px; flex: none; display: flex; flex-direction: column; background: #ebebeb; border-right: 1px solid #b3b3b3; }
.side-head { height: 27px; display: flex; align-items: center; justify-content: space-between; padding: 1px 7px 0 10px; background: #f5f5f5; border-bottom: 1px solid #b9b9b9; }
.side-head.muted { height: 26px; color: #7e7e7e; padding-right: 6px; }
.pages { height: 156px; border-bottom: 1px solid #b9b9b9; }
.pages li { height: 27px; line-height: 28px; padding-left: 27px; }
.pages li:nth-child(even) { background: #f0f0f0; }
.pages li.selected { background: #679ce0; color: #fff; }
.layers { flex: 1; }
.layers li { height: 27px; display: flex; align-items: center; padding: 2px 0 0 12px; background: #fafafa; border-bottom: 1px solid #c6c6c6; letter-spacing: .02px; }
.layers li > i { width: 0; height: 0; border: 5.500px solid transparent; border-left: 6.500px solid #a1a1a1; border-right: 0; margin: -3px 8.500px 0 0; }
.layers .dir { background: #ebebeb; border-bottom-color: transparent; }
.layers .alt { background: #f0f0f0; }
.layers .dir > svg:first-of-type { margin: -1px 7px 0 1px; }
.layers .dir + li:not(.dir) { border-top: 1px solid #c6c6c6; padding-top: 1px; }
.layers .hidden-layer { color: #868686; }
.layers .vis { margin: -1px 17px 0 auto; }
.filter { height: 31px; border-top: 1px solid #c6c6c6; background: #f3f3f3; display: flex; align-items: center; padding-left: 4px; }
.filter-box { width: 290px; height: 19px; border: 1px solid #bcbcbc; border-radius: 3px; background: #fff; display: flex; align-items: center; justify-content: center; gap: 5px; color: #bdbdbd; margin-right: 13px; padding-right: 17px; }
.filter-box svg { color: #777; }
.knife { margin: 0 2px 0 4px; }
.filter b { color: #4f95f2; font-size: 10px; font-weight: 700; }

/* canvas */
.canvas { flex: 1; position: relative; overflow: hidden; background: #f1f1f1; font-family: Roboto, sans-serif; }
.board { position: absolute; width: 194px; }
.c1 { left: 312px; } .c2 { left: 533px; } .c3 { left: 754px; } .c4 { left: 975px; } .c5 { left: 1195.600px; }
.r0 { top: -242px; } .r1 { top: 109px; } .r2 { top: 481px; } .r3 { top: 852px; } .r4 { top: 1224px; }
.board h2 { height: 20px; padding-left: 3px; font: 300 11px/19px Inter, sans-serif; letter-spacing: .18px; color: #737c71; white-space: nowrap; }
.screen { height: 344px; display: flex; flex-direction: column; background: #263238; color: #fff; box-shadow: 0 1px 3px rgba(0,0,0,.4); overflow: hidden; }
.top { height: 48px; flex: none; display: flex; justify-content: center; padding-top: 11px; position: relative; }
.arrow { position: absolute; left: 5.500px; top: 12px; color: #546c76; }
.screen h3 { height: 20px; flex: none; line-height: 20px; padding-left: 10px; font-size: 12.900px; font-weight: 500; white-space: nowrap; }
.sub { height: 20px; flex: none; line-height: 20px; padding-left: 10px; font-size: 9.400px; font-weight: 300; color: #9bafb9; white-space: nowrap; }
.airy { letter-spacing: .15px; }
.field { height: 33px; flex: none; display: flex; align-items: center; margin-left: 10px; padding-top: 4px; border-bottom: 1px solid #455a64; font-size: 9.600px; letter-spacing: .25px; color: #78909c; position: relative; white-space: nowrap; }
.pick { margin-right: 10px; }
.tri { margin: -4px 3px 0 auto; border: 4.500px solid transparent; border-top: 5px solid #90a4ae; border-bottom: 0; }
.empty { color: #50646d; border-color: #3f5059; }
.hot, .typed { border-color: #a3531d; }
.typed { color: #ff6d00; }
.digits { letter-spacing: .15px; }
.caret { width: 1px; height: 13px; background: #ff6d00; margin-top: -5px; flex: none; }
.typed .caret { margin-left: 1px; }
.empty .caret { margin-right: -1px; }
.ok { margin: -3px 9px 0 auto; }
.ok.near { margin-left: 8px; }
.peek { margin: -3px 0 0 auto; }
.thick { border-bottom: 2px solid #34444c; height: 34px; }
.thick.ember { border-color: #543a29; }
.dots { display: flex; gap: 1.500px; margin-right: 1px; }
.dots i { width: 4px; height: 4px; border-radius: 50%; background: #ff6d00; }
.hint { padding: 5px 0 0 10px; font-size: 7.500px; letter-spacing: .04px; line-height: 10px; color: #677e89; white-space: nowrap; }
.bar { height: 35px; flex: none; margin-top: auto; display: flex; align-items: center; padding: 0 10px; background: #2c3840; font-size: 7.500px; font-weight: 500; color: #bac7cd; white-space: nowrap; }
.bar:not(:last-child) { height: 36px; }
.next { margin-left: auto; width: 35px; height: 20px; border: 1px solid #45545c; border-radius: 2px; background: none; font: 400 7.500px/20px Roboto, sans-serif; letter-spacing: .2px; color: #56666e; padding-top: 1px; }
.next.on { background: #ff6d00; border-color: #ff6d00; color: #fff; }
.using { margin-right: 7px; }
.tw { margin-right: 4px; }
.fb { height: 270px; flex: none; background: #3b5998; color: #bccae2; font-size: 7px; text-align: center; padding-top: 250px; line-height: 12px; }
.by { flex: 1; display: flex; align-items: center; padding-left: 55px; gap: 8px; font-size: 7.400px; line-height: 10px; color: #5a6f79; }

.numpad, .keys, .dialpad { height: 121px; flex: none; background: #192023; }
.r0 .keys { margin-top: auto; }
.numpad { display: grid; grid-template-columns: 52px 52px 51.500px 38px; grid-auto-rows: 29.500px; align-items: center; justify-items: center; padding-top: 2px; }
.numpad b, .dialpad b { font-size: 20.500px; font-weight: 400; line-height: 29px; }
.numpad small { width: 26px; display: flex; justify-content: center; font-size: 7.600px; color: #566064; position: relative; }
.numpad small::after { content: ""; position: absolute; bottom: -3px; width: 15px; height: 1px; background: #7b8386; }
.del { color: #9e9e9e; }
.go { color: #9e9e9e; }
.keys .go { color: #666d71; }
.active .go { color: #ff6d00; }
.keys { padding: 10.500px 3px 0; position: relative; }
.krow { display: flex; height: 27px; align-items: center; color: #fff; }
.krow b { width: 18.800px; flex: none; text-align: center; font-size: 11px; font-weight: 400; line-height: 14px; }
.krow svg { overflow: visible; }
.krow.mid { padding-left: 9.400px; height: 28px; }
.krow.foot { height: 25px; }
.low .wide { margin: 0 7.500px 0 6.500px; }
.low .wide:last-child { margin: -4px 0 0 7.500px; }
.foot small { width: 28px; font-size: 6.500px; letter-spacing: .3px; color: #667077; text-align: center; margin-top: 4px; }
.foot .mic { margin: 0 12px 0 5.400px; }
.foot em { width: 81px; height: 13px; background: #60686c; border-radius: 1px; }
.foot b { width: 32px; padding-top: 4px; }
.foot .go { margin-left: -2px; }
.nums { position: absolute; top: 11px; left: 9px; right: -4px; display: flex; }
.nums i { width: 18.800px; text-align: center; font-size: 4.800px; line-height: 8px; color: #8a9295; }
.dialpad { display: grid; grid-template-columns: 52px 51.500px 52px; grid-auto-rows: 29.500px; align-items: center; padding: 2px 0 0 33px; }
.dialpad b { display: flex; align-items: center; }
.dialpad small { font-size: 6.300px; letter-spacing: .2px; line-height: 8px; color: #677178; padding: 9px 0 0 5px; width: 22px; height: 16px; }
.dialpad .del { margin: -2px 0 0 6px; }
.dialpad .go { margin: -1px 0 0 2px; }
.numpad .del, .numpad .go { margin-top: -1px; }

.menu { position: relative; height: 194px; margin: -4px 5px 0 4px; padding: 3px 0 0 5px; background: #566770; border-radius: 1px; flex: none; }
.menu li { height: 24.150px; line-height: 24px; font-size: 9.600px; letter-spacing: .26px; color: #b0bec5; white-space: nowrap; }
.menu .cur { color: #fff; }
.menu::after { content: ""; position: absolute; right: 3px; top: 87px; width: 2px; height: 49px; background: #3b4a52; }
.verify h3, .verify .sub { text-align: center; padding: 0; }
.code { display: flex; gap: 7px; margin: 0 0 0 23.500px; }
.code b { width: 18.600px; height: 33px; padding-top: 4px; line-height: 29px; text-align: center; font-weight: 400; font-size: 9.500px; color: #50626a; border-bottom: 1px solid #3a4a52; }

.interests { background: linear-gradient(#3b474c 72px, #263238 73px); }
.interests .top { height: 34px; }
.interests h3 { display: flex; justify-content: space-between; padding-right: 10px; }
.interests h3 em { color: #54646b; font-weight: 400; }
.search { margin: 5px 9.500px 0 10px; height: 30px; flex: none; background: #fff; border-radius: 2px; display: flex; align-items: center; padding-left: 9px; font-size: 9.600px; letter-spacing: .2px; color: #a9b5ba; }
.search > svg:first-child { color: #a9b5ba; margin-right: 6px; margin-top: -3px; }
.search .caret { height: 14px; margin-top: -2px; }
.search .clear { margin: -2px 10px 0 auto; }
.query { color: #ff6d00; }

/* inspector */
.strip { width: 42px; flex: none; background: #ececec; border-left: 1px solid #b5b5b5; border-right: 1px solid #b5b5b5; }
.tab { height: 40px; display: flex; align-items: center; justify-content: center; border-bottom: 1px solid #b5b5b5; }
.tab.first { height: 27px; background: #cbcbcb; }
.inspector { width: 213px; flex: none; background: #e6e6e6; }
.align { height: 27px; background: #f6f6f6; border-bottom: 1px solid #b9b9b9; display: flex; align-items: center; padding: 2px 0 0 7px; gap: 11px; }
.align i { width: 1px; height: 24px; margin: -2px -1px 0 -2px; background: #d6d6d6; }
.geometry { height: 116px; padding: 8px 9px 0 7px; display: grid; grid-template-columns: 63px 59px 16px 59px; grid-auto-rows: 35px; background: linear-gradient(90deg, #c3c3c3 60%, #e6e6e6 95%) bottom/100% 1px no-repeat; }
label { font-size: 11px; line-height: 20px; }
.cell { text-align: center; }
.cell span { display: block; font-size: 9px; line-height: 13px; }
u { display: block; height: 19px; background: #fff; border: 1px solid #b2b2b2; text-decoration: none; }
u.pale { border-color: #c9c9c9; }
.lock { padding: 5px 0 0 5px; }
.flip { height: 18px; margin-top: 1px; border: 1px solid #c9c9c9; border-radius: 4px; background: linear-gradient(#c9c9c9, #c9c9c9) center/1px 100% no-repeat #f1f1f1; display: grid; grid-template-columns: 1fr 1fr; align-items: center; justify-items: center; }
.style { height: 64px; padding: 8px 9px 0 7px; display: grid; grid-template-columns: 63px 91px 43px; grid-auto-rows: 27px; }
.slider { height: 20px; padding-right: 10px; display: flex; align-items: center; background: linear-gradient(#c7c7c7, #c7c7c7) 0 8px/81px 3px no-repeat; }
.slider i { width: 12px; height: 12px; margin-top: -1px; border-radius: 50%; background: #fff; box-shadow: 0 0 1px rgba(0,0,0,.5); }
.select { grid-column: 2 / 4; height: 20px; border: 1px solid #c4c4c4; border-radius: 4px; background: #f3f3f3; display: flex; align-items: center; justify-content: space-between; padding: 0 4px 0 9px; color: #7d7d7d; }
.sect { height: 26px; background: linear-gradient(90deg, #b9b9b9 60%, #e6e6e6 95%) top/100% 1px no-repeat; padding: 1px 9px 0 7px; display: flex; align-items: center; font-weight: 600; letter-spacing: .15px; color: #4d4d4d; }
.sect svg { margin-left: 7px; }
.check { margin-left: auto; width: 12px; height: 12px; border: 1px solid #bcbcbc; border-radius: 2px; background: #f3f3f3; }
```
